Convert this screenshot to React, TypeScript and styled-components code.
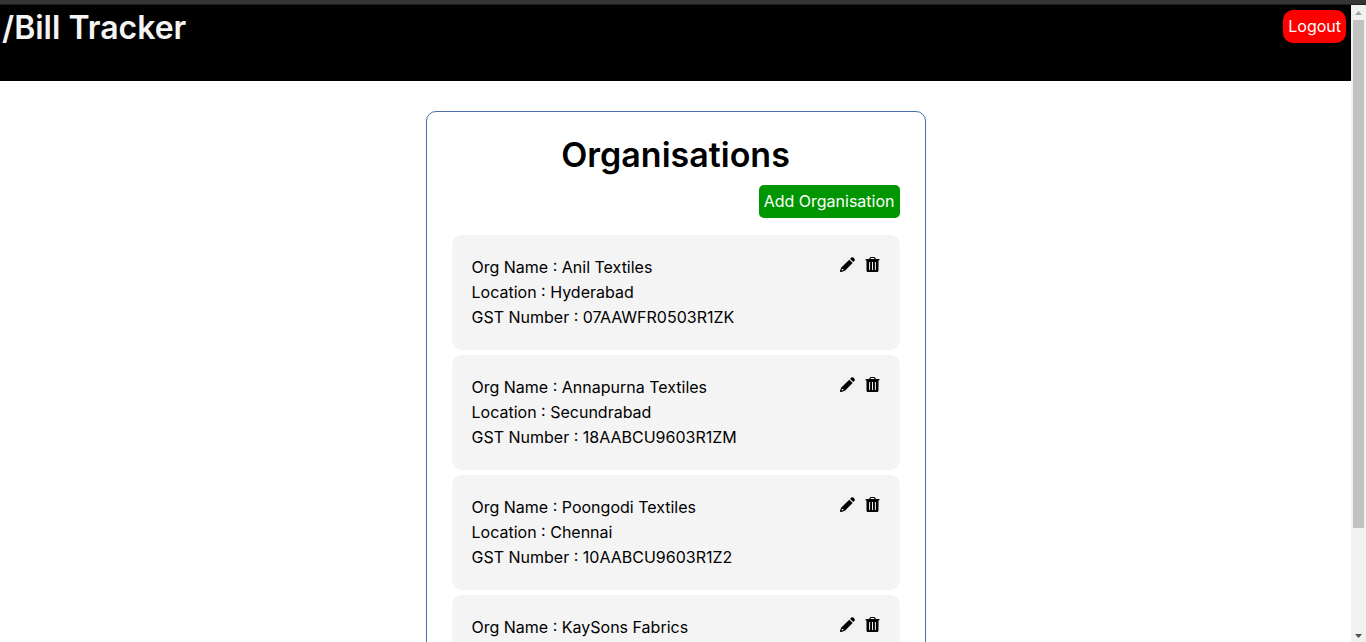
import React from 'react';
import styled, { createGlobalStyle } from 'styled-components';

const GlobalStyle = createGlobalStyle`
  * { box-sizing: border-box; }
  body {
    margin: 0;
    background: #fff;
    color: #000;
    font-family: Inter, "Open Sans", sans-serif;
    font-size: 16px;
    line-height: 25px;
  }
  button { font: inherit; border: 0; cursor: pointer; }
`;

const Shell = styled.div`
  display: flex;
  flex-direction: column;
  height: 100vh;
  overflow: hidden;
`;

const TopStrip = styled.div`
  flex: none;
  height: 5px;
  background: #353535;
  border-bottom: 1px solid #202020;
`;

const Viewport = styled.div`
  display: flex;
  flex: 1;
  min-height: 0;
`;

const Page = styled.div`
  flex: 1;
  min-width: 0;
  overflow: hidden;
`;

const Header = styled.header`
  display: flex;
  justify-content: space-between;
  align-items: flex-start;
  height: 76px;
  padding: 5px 5px 0 2px;
  background: #000;
`;

const Brand = styled.h1`
  margin: 0;
  color: #f4f4f4;
  font-size: 32px;
  font-weight: 600;
  line-height: 36px;
`;

const Button = styled.button<{ $color: string; $radius: number }>`
  height: 33px;
  padding: 0 5px;
  border-radius: ${(p) => p.$radius}px;
  background: ${(p) => p.$color};
  color: #fff;
  line-height: 33px;
  white-space: nowrap;
`;

const Panel = styled.main`
  width: 500px;
  max-width: 100%;
  margin: 30px auto;
  padding: 25px;
  border: 1px solid #4a6fb5;
  border-radius: 10px;
`;

const Title = styled.h2`
  margin: 0;
  font-size: 34px;
  font-weight: 600;
  line-height: 36px;
  text-align: center;
`;

const Actions = styled.div`
  display: flex;
  justify-content: flex-end;
  margin: 12px 0 17px;
`;

const List = styled.ul`
  display: flex;
  flex-direction: column;
  gap: 5px;
  margin: 0;
  padding: 0;
  list-style: none;
`;

const Card = styled.li`
  display: flex;
  justify-content: space-between;
  align-items: flex-start;
  padding: 20px;
  border-radius: 10px;
  background: #f4f4f4;
`;

const Line = styled.p`
  margin: 0;
`;

const CardTools = styled.div`
  display: flex;
  gap: 10px;
  padding-top: 2px;
`;

const IconButton = styled.button`
  display: flex;
  padding: 0;
  border-radius: 50%;
  background: #f0f0f0;
  color: #000;
`;

const Icon = styled.svg`
  display: block;
  width: 15px;
  height: 15px;
  overflow: visible;
`;

const Scrollbar = styled.div`
  display: flex;
  flex-direction: column;
  flex: none;
  width: 15px;
  padding: 0 2px;
  background: #f1f1f1;
`;

const Arrow = styled.svg`
  display: block;
  flex: none;
  width: 11px;
  height: 15px;
`;

const Thumb = styled.div`
  flex: 508;
  background: #c1c1c1;
`;

const TrackRest = styled.div`
  flex: 99;
`;

const PencilIcon = () => (
  <Icon viewBox="0 0 15 15" aria-hidden="true">
    <path
      fill="currentColor"
      fillRule="evenodd"
      d="M9.300 2.700 12.600 6 5.200 13.400Q4.800 13.800 4.300 13.950L1.200 15Q-.3 15.300 0 13.800L1 10.900Q1.200 10.400 1.600 10.200ZM1.900 11.800 1.400 13.500 3.200 13 3.400 12.100 2.600 11.900Z"
    />
    <path
      fill="currentColor"
      d="M10.100 1.900 11.400.6Q12.300-.2 13.300.6L14.500 1.800Q15.300 2.800 14.500 3.700L13.300 5.100Z"
    />
  </Icon>
);

const TrashIcon = () => (
  <Icon viewBox="0 0 15 15" aria-hidden="true">
    <path
      fill="currentColor"
      fillRule="evenodd"
      d="M1 2H4.200L4.800.6Q5.100 0 5.800 0H9.200Q9.900 0 10.200.6L10.800 2H14Q14.500 2 14.500 2.700T14 3.500H13.500V13.500Q13.500 15 12 15H3Q1.500 15 1.500 13.500V3.500H1Q.5 3.500 .5 2.700T1 2ZM5.500 2H9.500L9.100 1.100H5.900ZM4.100 5V13H5.100V5ZM7 5V13H8V5ZM9.900 5V13H10.900V5Z"
    />
  </Icon>
);

const organisations = [
  { name: 'Anil Textiles', location: 'Hyderabad', gst: '07AAWFR0503R1ZK' },
  { name: 'Annapurna Textiles', location: 'Secundrabad', gst: '18AABCU9603R1ZM' },
  { name: 'Poongodi Textiles', location: 'Chennai', gst: '10AABCU9603R1Z2' },
  { name: 'KaySons Fabrics', location: '', gst: '' },
];

export default function App() {
  return (
    <Shell>
      <GlobalStyle />
      <TopStrip />
      <Viewport>
        <Page>
          <Header>
            <Brand>/Bill Tracker</Brand>
            <Button $color="#ff0000" $radius={10}>Logout</Button>
          </Header>
          <Panel>
            <Title>Organisations</Title>
            <Actions>
              <Button $color="#009600" $radius={5}>Add Organisation</Button>
            </Actions>
            <List>
              {organisations.map((org) => (
                <Card key={org.name}>
                  <div>
                    <Line>Org Name : {org.name}</Line>
                    {org.location && <Line>Location : {org.location}</Line>}
                    {org.gst && <Line>GST Number : {org.gst}</Line>}
                  </div>
                  <CardTools>
                    <IconButton aria-label="Edit"><PencilIcon /></IconButton>
                    <IconButton aria-label="Delete"><TrashIcon /></IconButton>
                  </CardTools>
                </Card>
              ))}
            </List>
          </Panel>
        </Page>
        <Scrollbar>
          <Arrow viewBox="0 0 11 15"><path d="M2 10h7L5.500 6z" fill="#a3a3a3" /></Arrow>
          <Thumb />
          <TrackRest />
          <Arrow viewBox="0 0 11 15"><path d="M2 7h7L5.500 11z" fill="#505050" /></Arrow>
        </Scrollbar>
      </Viewport>
    </Shell>
  );
}
